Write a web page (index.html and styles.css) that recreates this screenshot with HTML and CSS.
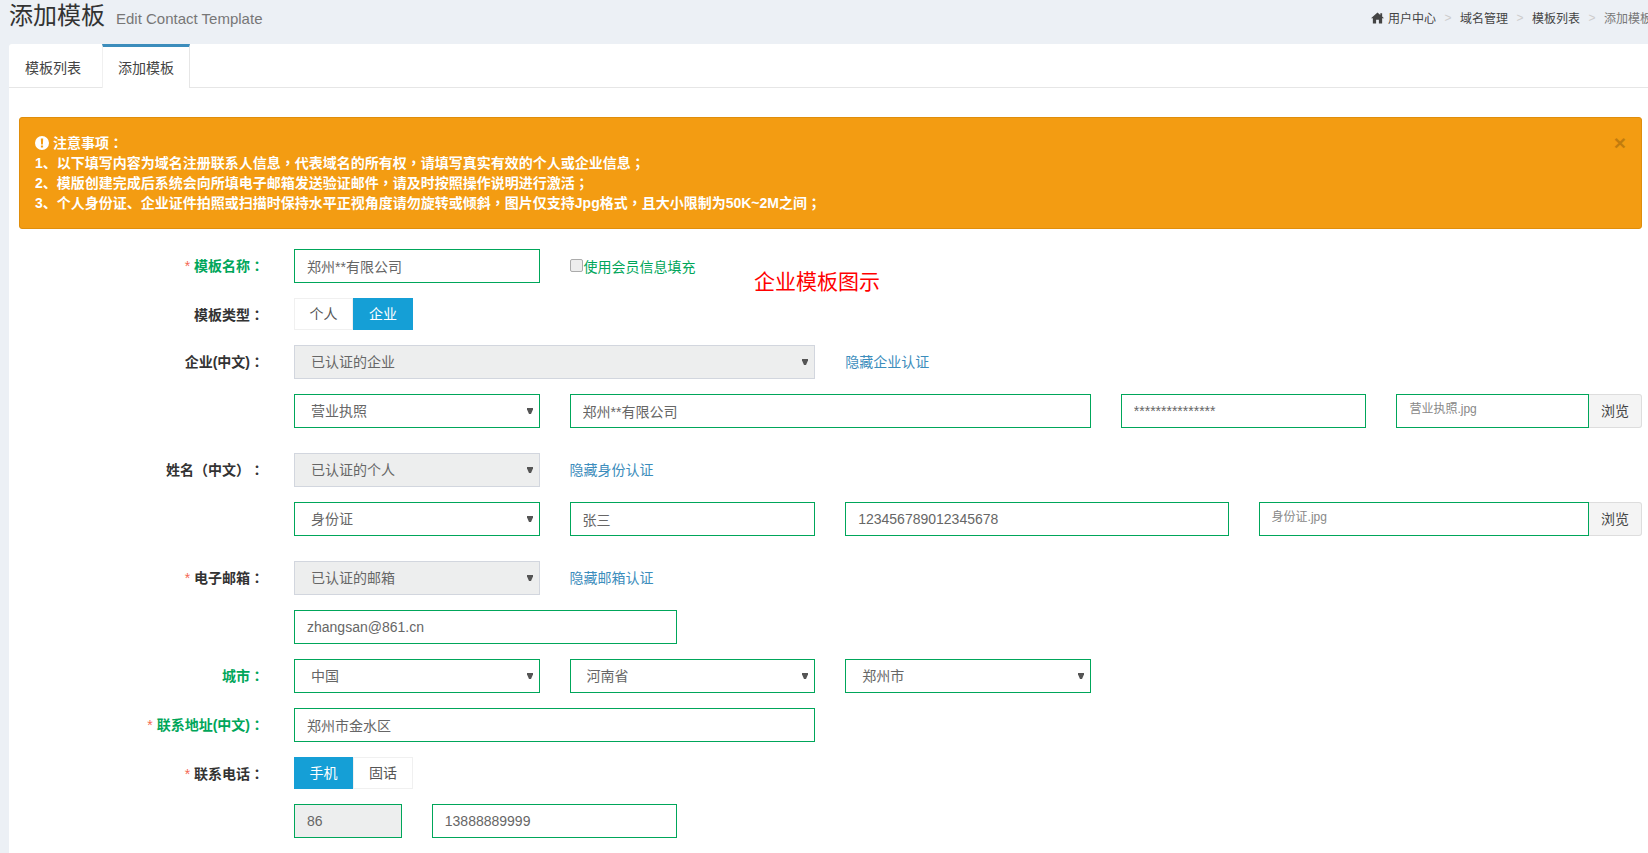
FILE: index.html
```html
<!DOCTYPE html>
<html lang="zh-cn">

<head>
  <meta charset="UTF-8" />
  <title>添加模板</title>
  <link rel="stylesheet" href="styles.css">
</head>

<body>
  <section class="content-header">
    <h1>添加模板<small>Edit Contact Template</small></h1>
    <ol class="breadcrumb">
      <li>
        <svg class="icon-home" viewBox="0 0 14 12"><path d="M7 0 L10 2.7 V1 H12 V4.5 L14 6.4 H12 V12 H8.5 V8 H5.5 V12 H2 V6.4 H0 Z" /></svg>
        <a href="#">用户中心</a>
      </li>
      <li class="sep">&gt;</li>
      <li><a href="#">域名管理</a></li>
      <li class="sep">&gt;</li>
      <li><a href="#">模板列表</a></li>
      <li class="sep">&gt;</li>
      <li class="active">添加模板</li>
    </ol>
  </section>

  <div class="tabs-card">
    <ul class="nav-tabs">
      <li><a href="#">模板列表</a></li>
      <li class="active"><a href="#">添加模板</a></li>
    </ul>

    <div class="tab-content">
      <div class="alert">
        <span class="close">×</span>
        <div>
          <svg class="icon-warn" viewBox="0 0 14 14"><path fill-rule="evenodd" d="M7 0a7 7 0 1 0 0 14A7 7 0 0 0 7 0zM5.8 2.4h2.4L7.9 8.4H6.1zM5.9 9.6h2.2v2H5.9z" /></svg>
          注意事项<span class="pn" lang="zh-tw">：</span>
        </div>
        <div>1、以下填写内容为域名注册联系人信息<span class="pn" lang="zh-tw">，</span>代表域名的所有权<span class="pn" lang="zh-tw">，</span>请填写真实有效的个人或企业信息<span class="pn" lang="zh-tw">；</span></div>
        <div>2、模版创建完成后系统会向所填电子邮箱发送验证邮件<span class="pn" lang="zh-tw">，</span>请及时按照操作说明进行激活<span class="pn" lang="zh-tw">；</span></div>
        <div>3、个人身份证、企业证件拍照或扫描时保持水平正视角度请勿旋转或倾斜<span class="pn" lang="zh-tw">，</span>图片仅支持Jpg格式<span class="pn" lang="zh-tw">，</span>且大小限制为50K~2M之间<span class="pn" lang="zh-tw">；</span></div>
      </div>

      <form class="form">
        <span class="note">企业模板图示</span>

        <div class="form-row">
          <label class="row-label ok"><i>*</i> 模板名称<span class="pn" lang="zh-tw">：</span></label>
          <div class="col col-20"><input class="field ok" type="text" value="郑州**有限公司"></div>
          <div class="col col-80 check-col">
            <label class="check"><input type="checkbox">使用会员信息填充</label>
          </div>
        </div>

        <div class="form-row toggle-row">
          <label class="row-label">模板类型<span class="pn" lang="zh-tw">：</span></label>
          <div class="col col-20">
            <div class="toggle"><span>个人</span><span class="on">企业</span></div>
          </div>
        </div>

        <div class="form-row">
          <label class="row-label">企业(中文)<span class="pn" lang="zh-tw">：</span></label>
          <div class="col col-40">
            <select class="field" disabled><option>已认证的企业</option></select>
          </div>
          <div class="col col-20 link-col"><a href="#">隐藏企业认证</a></div>
        </div>

        <div class="form-row group-end">
          <div class="row-label"></div>
          <div class="col col-20">
            <select class="field ok"><option>营业执照</option></select>
          </div>
          <div class="col col-40"><input class="field ok" type="text" value="郑州**有限公司"></div>
          <div class="col col-20"><input class="field ok" type="text" value="***************"></div>
          <div class="col col-20">
            <div class="file-group">
              <input class="field ok file-name" type="text" value="营业执照.jpg">
              <span class="file-btn">浏览</span>
            </div>
          </div>
        </div>

        <div class="form-row">
          <label class="row-label">姓名（中文）<span class="pn" lang="zh-tw">：</span></label>
          <div class="col col-20">
            <select class="field" disabled><option>已认证的个人</option></select>
          </div>
          <div class="col col-20 link-col"><a href="#">隐藏身份认证</a></div>
        </div>

        <div class="form-row group-end">
          <div class="row-label"></div>
          <div class="col col-20">
            <select class="field ok"><option>身份证</option></select>
          </div>
          <div class="col col-20"><input class="field ok" type="text" value="张三"></div>
          <div class="col col-30"><input class="field ok" type="text" value="123456789012345678"></div>
          <div class="col col-30">
            <div class="file-group">
              <input class="field ok file-name" type="text" value="身份证.jpg">
              <span class="file-btn">浏览</span>
            </div>
          </div>
        </div>

        <div class="form-row">
          <label class="row-label"><i>*</i> 电子邮箱<span class="pn" lang="zh-tw">：</span></label>
          <div class="col col-20">
            <select class="field" disabled><option>已认证的邮箱</option></select>
          </div>
          <div class="col col-20 link-col"><a href="#">隐藏邮箱认证</a></div>
        </div>

        <div class="form-row">
          <div class="row-label"></div>
          <div class="col col-30"><input class="field ok" type="text" value="zhangsan@861.cn"></div>
        </div>

        <div class="form-row">
          <label class="row-label ok">城市<span class="pn" lang="zh-tw">：</span></label>
          <div class="col col-20"><select class="field ok"><option>中国</option></select></div>
          <div class="col col-20"><select class="field ok"><option>河南省</option></select></div>
          <div class="col col-20"><select class="field ok"><option>郑州市</option></select></div>
        </div>

        <div class="form-row">
          <label class="row-label ok"><i>*</i> 联系地址(中文)<span class="pn" lang="zh-tw">：</span></label>
          <div class="col col-40"><input class="field ok" type="text" value="郑州市金水区"></div>
        </div>

        <div class="form-row toggle-row">
          <label class="row-label"><i>*</i> 联系电话<span class="pn" lang="zh-tw">：</span></label>
          <div class="col col-20">
            <div class="toggle"><span class="on">手机</span><span>固话</span></div>
          </div>
        </div>

        <div class="form-row">
          <div class="row-label"></div>
          <div class="col col-10"><input class="field ok" type="text" value="86" readonly></div>
          <div class="col col-20"><input class="field ok" type="text" value="13888889999"></div>
        </div>
      </form>
    </div>
  </div>
</body>

</html>
```

FILE: styles.css
```css
html,
body {
  height: 853px;
  overflow: hidden;
}

body {
  margin: 0;
  background-color: #ecf0f5;
  color: #333;
  font-family: "Liberation Sans", "Noto Sans CJK SC", sans-serif;
  font-size: 14px;
  text-spacing-trim: space-all;
}

a {
  color: inherit;
  text-decoration: none;
}

/* centred full-width punctuation, as in the original font */
.pn {
  font-family: "Noto Sans CJK TC", sans-serif;
  line-height: 1;
}

/* header */
.content-header {
  display: flex;
  justify-content: space-between;
  height: 44px;
  padding-left: 9px;
}

.content-header h1 {
  margin: 0;
  font-size: 24px;
  font-weight: normal;
  line-height: 32px;
}

.content-header small {
  margin-left: 11px;
  color: #777;
  font-size: 15px;
}

.breadcrumb {
  display: flex;
  gap: 8.5px;
  align-items: center;
  height: 35px;
  margin: 0 -4px 0 0;
  padding: 0;
  list-style: none;
  font-size: 12px;
  color: #444;
}

.breadcrumb li {
  display: flex;
  align-items: center;
  gap: 4px;
  white-space: nowrap;
}

.breadcrumb .sep {
  color: #ccc;
}

.breadcrumb .active {
  color: #777;
}

.icon-home {
  width: 13px;
  height: 12px;
  fill: #444;
}

/* tabs */
.tabs-card {
  width: 1643px;
  min-height: 809px;
  margin-left: 9px;
  background-color: #fff;
  border-radius: 3px 0 0 0;
}

.nav-tabs {
  display: flex;
  height: 43px;
  margin: 0;
  padding: 0;
  list-style: none;
  border-bottom: 1px solid #e6e6e6;
}

.nav-tabs li {
  margin-right: 5px;
}

.nav-tabs li a {
  display: block;
  box-sizing: border-box;
  height: 43px;
  padding: 14px 16px 0;
  color: #444;
  font-size: 14px;
  line-height: 20px;
}

.nav-tabs li.active {
  box-sizing: border-box;
  height: 44px;
  margin-bottom: -1px;
  background-color: #fff;
  border-top: 3px solid #3c8dbc;
  border-left: 1px solid #f0f0f0;
  border-right: 1px solid #e6e6e6;
}

.nav-tabs li.active a {
  padding: 11px 15px 0;
}

.tab-content {
  padding: 29px 10px 0;
}

/* alert */
.alert {
  position: relative;
  margin-bottom: 20px;
  padding: 15px 35px 15px 15px;
  background-color: #f39c12;
  border: 1px solid #e08e0b;
  border-radius: 3px;
  color: #fff;
  font-weight: bold;
  line-height: 20px;
}

.alert .close {
  position: absolute;
  top: 13px;
  right: 15px;
  color: #000;
  font-size: 21px;
  line-height: 24px;
  opacity: 0.2;
}

.icon-warn {
  width: 14px;
  height: 14px;
  fill: #fff;
  vertical-align: -2px;
}

/* form */
.form {
  position: relative;
}

.note {
  position: absolute;
  top: 13px;
  left: 735px;
  color: #f00;
  font-size: 21px;
  line-height: 40px;
}

.form-row {
  display: flex;
  margin: 0 -15px 15px 0;
}

.form-row.group-end {
  margin-bottom: 25px;
}

/* toggles are 2px shorter than the inputs */
.form-row.toggle-row {
  margin-bottom: 13px;
}

.row-label {
  flex: none;
  box-sizing: border-box;
  width: 260px;
  padding-right: 15px;
  color: #333;
  font-size: 14px;
  font-weight: bold;
  line-height: 34px;
  text-align: right;
}

.row-label.ok {
  color: #00a65a;
}

.row-label i {
  color: #f56954;
  font-style: normal;
  font-weight: normal;
}

.col {
  box-sizing: border-box;
  padding: 0 15px;
}

.col-10 { width: 137.8px; }
.col-20 { width: 275.6px; }
.col-30 { width: 413.4px; }
.col-40 { width: 551.2px; }
.col-80 { width: 1102.4px; }

.field {
  display: block;
  box-sizing: border-box;
  width: 100%;
  height: 34px;
  padding: 6px 12px;
  background-color: #fff;
  border: 1px solid #d2d6de;
  border-radius: 0;
  color: #666;
  font-family: inherit;
  font-size: 14px;
  outline: none;
}

select.field {
  appearance: none;
  padding-left: 16px;
  background-image: url("data:image/svg+xml,%3Csvg xmlns='http://www.w3.org/2000/svg' width='6' height='6'%3E%3Cpath d='M0 0H6V1.5L4 6H2L0 1.5Z' fill='%23555'/%3E%3C/svg%3E");
  background-repeat: no-repeat;
  background-position: right 6px center;
}

.field.ok {
  border-color: #00a65a;
}

.field[disabled],
.field[readonly] {
  background-color: #edeeee;
  opacity: 1;
}

.link-col {
  color: #3c8dbc;
  font-size: 14px;
  line-height: 34px;
}

.check-col {
  padding-top: 6px;
}

.check {
  display: flex;
  align-items: center;
  color: #00a65a;
  font-size: 14px;
  line-height: 24px;
}

.check input {
  appearance: none;
  box-sizing: border-box;
  width: 13px;
  height: 13px;
  margin: -4px 1px 0 0;
  background-color: #ededed;
  border: 1px solid #ababab;
  border-radius: 2px;
}

.toggle {
  display: flex;
  width: 119px;
  height: 32px;
  color: #555;
  font-size: 14px;
  text-align: center;
}

.toggle span {
  flex: 1;
  box-sizing: border-box;
  border: 1px solid #f0f0f0;
  line-height: 30px;
}

.toggle span:first-child {
  flex: none;
  width: 59px;
}

.toggle .on {
  background-color: #159fd6;
  border-color: #159fd6;
  color: #fff;
}

.file-group {
  display: flex;
}

.file-name {
  flex: 1;
  min-width: 0;
  padding: 4px 12px 12px;
  color: #888;
  font-size: 12px;
}

.file-btn {
  flex: none;
  box-sizing: border-box;
  width: 53px;
  height: 34px;
  background-color: #f4f4f4;
  border: 1px solid #ddd;
  border-left: 0;
  border-radius: 0 3px 3px 0;
  color: #444;
  font-size: 14px;
  line-height: 32px;
  text-align: center;
}
```
